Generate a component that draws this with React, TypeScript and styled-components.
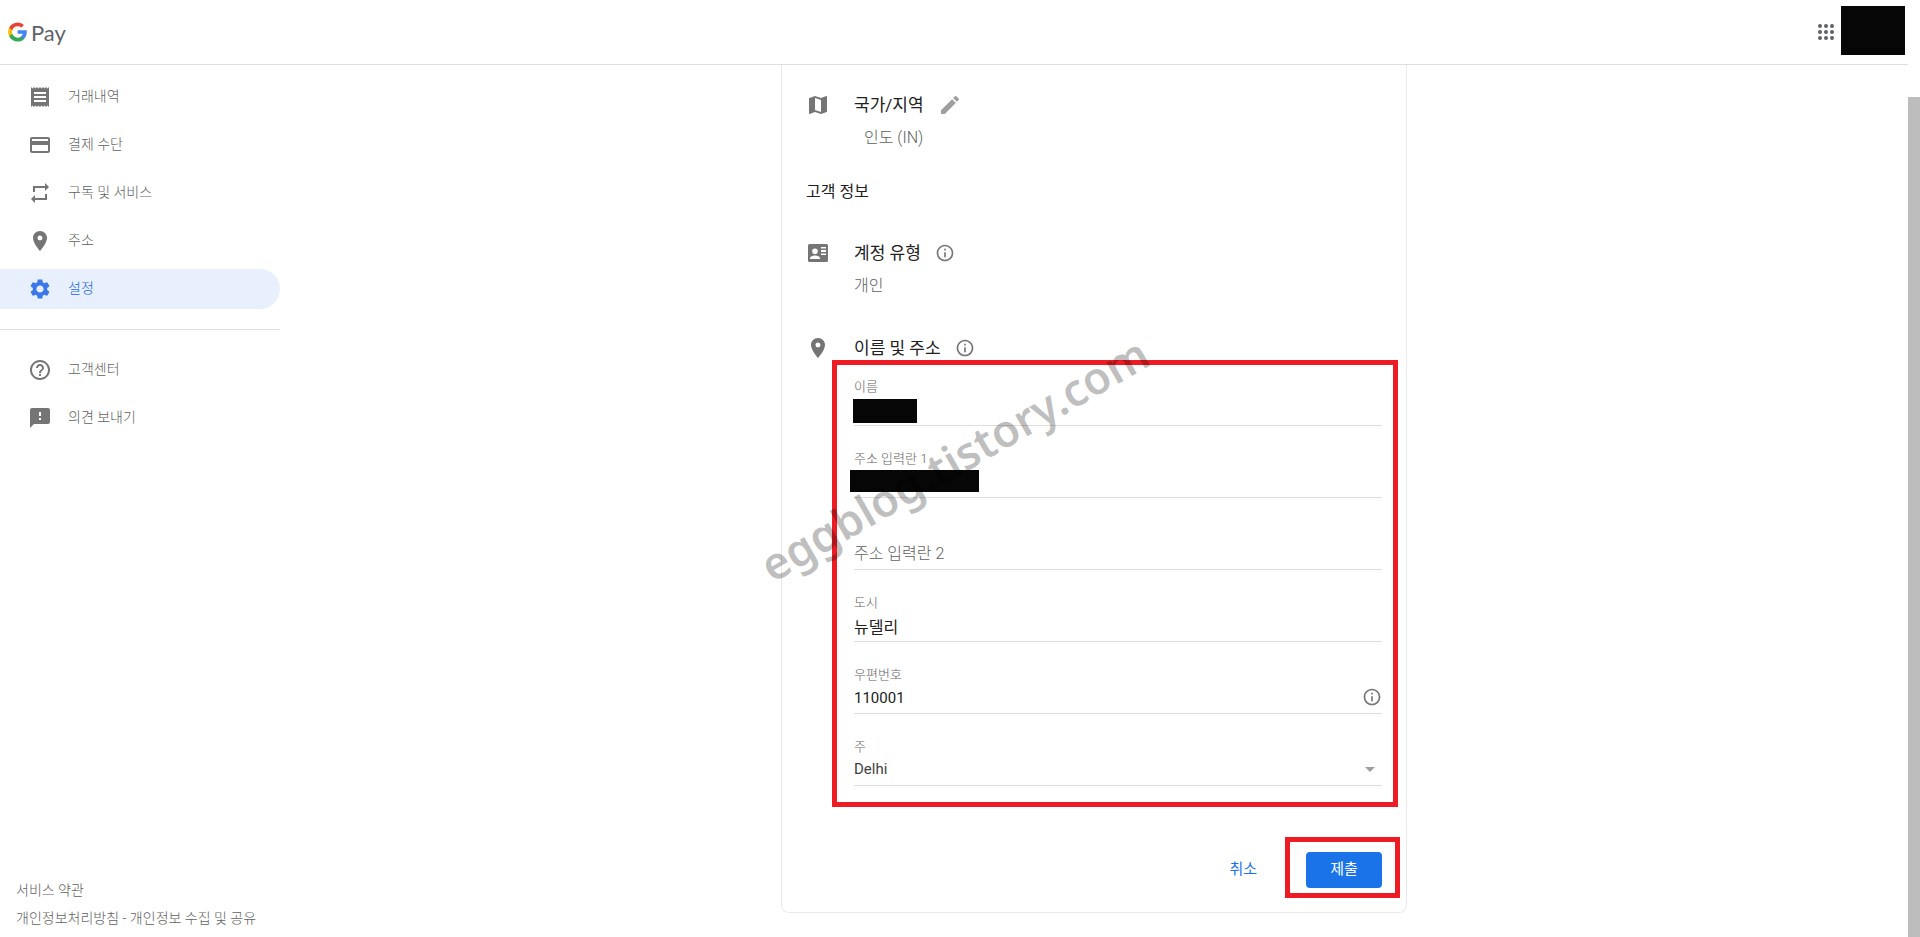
import React from 'react';
import styled, { createGlobalStyle, css } from 'styled-components';
import {
  MdArrowDropDown,
  MdCreditCard,
  MdEdit,
  MdFeedback,
  MdHelpOutline,
  MdInfoOutline,
  MdMap,
  MdPlace,
  MdReceipt,
  MdRepeat,
  MdSettings,
} from 'react-icons/md';

const GlobalStyle = createGlobalStyle`
  *, *::before, *::after { box-sizing: border-box; }
  body {
    margin: 0;
    background: #fff;
    color: #212121;
    font-family: Roboto, "Noto Sans CJK KR", sans-serif;
  }
  ul { list-style: none; }
  button, input, select { font-family: inherit; }
  svg { display: block; flex: none; }
`;

const Page = styled.div`
  display: grid;
  grid-template-columns: minmax(0, 1fr) 12px;
  min-height: 100vh;
`;

const Shell = styled.div`
  position: relative;
  display: flex;
  flex-direction: column;
  overflow: hidden;
`;

const ScrollTrack = styled.div`
  display: flex;
  padding-top: 97px;
`;

const ScrollThumb = styled.div`
  flex: 1;
  background: #bdbdbd;
`;

const Header = styled.header`
  display: flex;
  align-items: center;
  justify-content: space-between;
  height: 65px;
  padding: 0 3px 0 8px;
  border-bottom: 1px solid #dedede;
`;

const Brand = styled.a`
  display: flex;
  align-items: center;
  gap: 4px;
  color: #5f6368;
  font-family: Lato, sans-serif;
  font-size: 22px;
  line-height: 24px;
  text-decoration: none;
`;

const Wordmark = styled.span`
  padding-top: 2px;
`;

const HeaderTools = styled.div`
  display: flex;
  align-items: center;
  gap: 3px;
  height: 64px;
`;

const IconButton = styled.button<{ $tone?: string }>`
  display: flex;
  padding: 0;
  border: 0;
  background: none;
  color: ${({ $tone }) => $tone ?? '#757575'};
  cursor: pointer;
`;

const Avatar = styled.div`
  align-self: flex-start;
  width: 64px;
  height: 49px;
  margin-top: 6px;
  background: #060606;
`;

const Body = styled.div`
  display: flex;
  flex: 1;
`;

const Sidebar = styled.aside`
  display: flex;
  flex: none;
  flex-direction: column;
  width: 280px;
  padding: 12px 0 5px;
`;

const NavList = styled.ul`
  display: flex;
  flex-direction: column;
  gap: 8px;
  margin: 0;
  padding: 0;

  & + & {
    margin-top: 20px;
    padding-top: 20px;
    border-top: 1px solid #e0e0e0;
  }
`;

const NavLink = styled.a<{ $active?: boolean }>`
  display: flex;
  align-items: center;
  gap: 16px;
  height: 40px;
  padding-left: 28px;
  border-radius: 0 20px 20px 0;
  color: #757575;
  text-decoration: none;

  ${({ $active }) =>
    $active &&
    css`
      background: #e8f0fe;
      color: #3b78e7;
    `}
`;

const NavLabel = styled.span<{ $active?: boolean }>`
  padding-bottom: 3px;
  color: ${({ $active }) => ($active ? '#1a66e0' : '#616161')};
  font-size: 14px;
  font-weight: 300;
  line-height: 20px;
`;

const LegalLinks = styled.footer`
  display: flex;
  flex-direction: column;
  align-items: flex-start;
  margin-top: auto;
  padding-left: 16px;
`;

const LegalLink = styled.a`
  color: #616161;
  font-size: 14px;
  font-weight: 300;
  line-height: 28px;
  text-decoration: none;
`;

const Main = styled.main`
  display: flex;
  flex: 1;
  align-items: flex-start;
  justify-content: center;
  padding-bottom: 24px;
`;

const Card = styled.section`
  width: 100%;
  max-width: 626px;
  padding-top: 28px;
  border: 1px solid #e8eaed;
  border-top: 0;
  border-radius: 0 0 8px 8px;
`;

const Setting = styled.div<{ $space?: number }>`
  display: grid;
  grid-template-columns: 24px 1fr;
  column-gap: 24px;
  row-gap: 9px;
  margin-top: ${({ $space }) => $space ?? 0}px;
  padding: 0 24px;
  color: #757575;
`;

const SettingTitle = styled.div`
  display: flex;
  align-items: center;
  gap: 14px;
`;

const SettingName = styled.h3`
  margin: 0;
  color: #212121;
  font-size: 17px;
  font-weight: 400;
  line-height: 24px;
`;

const SettingValue = styled.p<{ $indent?: boolean }>`
  grid-column: 2;
  margin: 0;
  padding-left: ${({ $indent }) => ($indent ? 10 : 0)}px;
  color: #616161;
  font-size: 16px;
  font-weight: 300;
  line-height: 24px;
`;

const GroupHeading = styled.h2`
  margin: 30px 0 0;
  padding: 0 24px;
  font-size: 16px;
  font-weight: 400;
  line-height: 24px;
`;

const FieldsHighlight = styled.div`
  display: flex;
  flex-direction: column;
  gap: 11px;
  margin: 0 8px 0 50px;
  padding: 0 11px 16px 17px;
  border: 5px solid #ed1c24;
`;

const Field = styled.div`
  position: relative;
  display: flex;
  flex-direction: column;
  justify-content: flex-end;
  gap: 2px;
  height: 61px;
  padding-bottom: 4px;
  border-bottom: 1px solid #dedede;
`;

const FieldLabel = styled.label`
  color: #616161;
  font-size: 13px;
  font-weight: 300;
  line-height: 16px;
`;

const FieldRow = styled.div`
  display: flex;
  align-items: center;
  height: 24px;
`;

const control = css`
  flex: 1;
  min-width: 0;
  height: 24px;
  border: 0;
  outline: 0;
  background: none;
`;

const TextInput = styled.input<{ $latin?: boolean }>`
  ${control}
  padding: 1px 0 0;
  color: #212121;
  font-size: ${({ $latin }) => ($latin ? 15 : 16)}px;

  &::placeholder {
    color: #616161;
    font-weight: 300;
    opacity: 1;
  }
`;

const Select = styled.select`
  ${control}
  appearance: none;
  padding: 0;
  color: #424242;
  font-size: 15px;
`;

const Redaction = styled.span<{ $wide?: boolean }>`
  position: absolute;
  bottom: ${({ $wide }) => ($wide ? 5 : 2)}px;
  left: ${({ $wide }) => ($wide ? -4 : -1)}px;
  width: ${({ $wide }) => ($wide ? 129 : 64)}px;
  height: ${({ $wide }) => ($wide ? 22 : 24)}px;
  background: #060606;
`;

const Actions = styled.div`
  display: flex;
  align-items: center;
  justify-content: flex-end;
  gap: 28px;
  padding: 30px 6px 14px;
`;

const TextButton = styled.button`
  padding: 2px 0 0;
  border: 0;
  background: none;
  color: #1a73e8;
  font-size: 15px;
  line-height: 24px;
  cursor: pointer;
`;

const SubmitHighlight = styled.div`
  padding: 10px 13px 5px 16px;
  border: 5px solid #ed1c24;
`;

const SubmitButton = styled.button`
  display: block;
  width: 76px;
  height: 36px;
  padding: 0 0 6px;
  border: 0;
  border-radius: 4px;
  background: #1a73e8;
  color: #fff;
  font-size: 15px;
  cursor: pointer;
`;

const Watermark = styled.div`
  position: absolute;
  top: 49%;
  left: 50%;
  color: rgba(0, 0, 0, 0.25);
  font-family: "Noto Sans", sans-serif;
  font-size: 45px;
  font-weight: 600;
  line-height: 60px;
  white-space: nowrap;
  pointer-events: none;
  transform: translate(-50%, -50%) rotate(-30deg);
`;

const GoogleMark = () => (
  <svg width="19" height="20" viewBox="0 0 48 49" aria-hidden="true">
    <path fill="#4285f4" d="M47.5 24.6c0-1.6-.1-3.200-.4-4.700H24.300v9.200h13c-.6 3-2.300 5.500-4.800 7.200v6h7.800c4.600-4.200 7.200-10.400 7.200-17.700z" />
    <path fill="#34a853" d="M24.300 48.500c6.500 0 12-2.200 16-5.900l-7.800-6c-2.200 1.500-4.900 2.300-8.200 2.300-6.300 0-11.600-4.200-13.500-9.900h-8v6.200c4 7.900 12.100 13.300 21.500 13.300z" />
    <path fill="#fbbc05" d="M10.800 29c-1-3-1-6.200 0-9.200v-6.200h-8c-3.400 6.800-3.400 14.800 0 21.600z" />
    <path fill="#ea4335" d="M24.300 9.900c3.500 0 6.700 1.200 9.100 3.600l6.900-6.900C36.100 2.700 30.800.4 24.300.4 14.900.4 6.800 5.800 2.800 13.600l8 6.200c1.900-5.700 7.200-9.900 13.500-9.900z" />
  </svg>
);

const AppsIcon = () => (
  <svg width="24" height="24" viewBox="0 0 24 24" fill="currentColor" aria-hidden="true">
    {[6, 12, 18].map((cy) => [6, 12, 18].map((cx) => <circle key={`${cx}-${cy}`} cx={cx} cy={cy} r="2" />))}
  </svg>
);

const ContactCardIcon = () => (
  <svg width="24" height="24" viewBox="0 0 24 24" fill="currentColor" aria-hidden="true">
    <path
      fillRule="evenodd"
      d="M3.500 3h17A1.500 1.500 0 0 1 22 4.500v15a1.500 1.500 0 0 1-1.500 1.500h-17A1.500 1.500 0 0 1 2 19.500v-15A1.500 1.500 0 0 1 3.500 3zM9 7.500a2.800 2.800 0 1 0 0 5.600 2.800 2.800 0 0 0 0-5.600zM4 18h10v-.8c0-1.700-3-2.700-5-2.700s-5 1-5 2.700zM15 6v1.500h5V6zm0 3v2h5V9zm0 3.500V14h5v-1.500z"
    />
  </svg>
);

type NavEntry = { label: string; Icon: React.ComponentType<{ size?: number }>; active?: boolean };

const primaryLinks: NavEntry[] = [
  { label: '거래내역', Icon: MdReceipt },
  { label: '결제 수단', Icon: MdCreditCard },
  { label: '구독 및 서비스', Icon: MdRepeat },
  { label: '주소', Icon: MdPlace },
  { label: '설정', Icon: MdSettings, active: true },
];

const supportLinks: NavEntry[] = [
  { label: '고객센터', Icon: MdHelpOutline },
  { label: '의견 보내기', Icon: MdFeedback },
];

const NavGroup = ({ links }: { links: NavEntry[] }) => (
  <NavList>
    {links.map(({ label, Icon, active }) => (
      <li key={label}>
        <NavLink href="#" $active={active} aria-current={active ? 'page' : undefined}>
          <Icon size={24} />
          <NavLabel $active={active}>{label}</NavLabel>
        </NavLink>
      </li>
    ))}
  </NavList>
);

const InfoButton = ({ label }: { label: string }) => (
  <IconButton type="button" aria-label={label}>
    <MdInfoOutline size={20} />
  </IconButton>
);

export default function App() {
  return (
    <>
      <GlobalStyle />
      <Page>
        <Shell>
          <Header>
            <Brand href="#">
              <GoogleMark />
              <Wordmark>Pay</Wordmark>
            </Brand>
            <HeaderTools>
              <IconButton type="button" $tone="#5f6368" aria-label="Google 앱">
                <AppsIcon />
              </IconButton>
              <Avatar />
            </HeaderTools>
          </Header>
          <Body>
            <Sidebar>
              <nav>
                <NavGroup links={primaryLinks} />
                <NavGroup links={supportLinks} />
              </nav>
              <LegalLinks>
                <LegalLink href="#">서비스 약관</LegalLink>
                <LegalLink href="#">개인정보처리방침 - 개인정보 수집 및 공유</LegalLink>
              </LegalLinks>
            </Sidebar>
            <Main>
              <Card>
                <Setting>
                  <MdMap size={24} />
                  <SettingTitle>
                    <SettingName>국가/지역</SettingName>
                    <IconButton type="button" $tone="#9e9e9e" aria-label="국가/지역 수정">
                      <MdEdit size={24} />
                    </IconButton>
                  </SettingTitle>
                  <SettingValue $indent>인도 (IN)</SettingValue>
                </Setting>
                <GroupHeading>고객 정보</GroupHeading>
                <Setting $space={37}>
                  <ContactCardIcon />
                  <SettingTitle>
                    <SettingName>계정 유형</SettingName>
                    <InfoButton label="계정 유형 정보" />
                  </SettingTitle>
                  <SettingValue>개인</SettingValue>
                </Setting>
                <Setting $space={38}>
                  <MdPlace size={24} />
                  <SettingTitle>
                    <SettingName>이름 및 주소</SettingName>
                    <InfoButton label="이름 및 주소 정보" />
                  </SettingTitle>
                </Setting>
                <form onSubmit={(event) => event.preventDefault()}>
                  <FieldsHighlight>
                    <Field>
                      <FieldLabel htmlFor="name">이름</FieldLabel>
                      <FieldRow>
                        <TextInput id="name" />
                      </FieldRow>
                      <Redaction />
                    </Field>
                    <Field>
                      <FieldLabel htmlFor="address1">주소 입력란 1</FieldLabel>
                      <FieldRow>
                        <TextInput id="address1" />
                      </FieldRow>
                      <Redaction $wide />
                    </Field>
                    <Field>
                      <FieldRow>
                        <TextInput aria-label="주소 입력란 2" placeholder="주소 입력란 2" />
                      </FieldRow>
                    </Field>
                    <Field>
                      <FieldLabel htmlFor="city">도시</FieldLabel>
                      <FieldRow>
                        <TextInput id="city" defaultValue="뉴델리" />
                      </FieldRow>
                    </Field>
                    <Field>
                      <FieldLabel htmlFor="postcode">우편번호</FieldLabel>
                      <FieldRow>
                        <TextInput id="postcode" $latin defaultValue="110001" />
                        <InfoButton label="우편번호 정보" />
                      </FieldRow>
                    </Field>
                    <Field>
                      <FieldLabel htmlFor="state">주</FieldLabel>
                      <FieldRow>
                        <Select id="state" defaultValue="Delhi">
                          <option>Delhi</option>
                        </Select>
                        <MdArrowDropDown size={24} color="#9e9e9e" />
                      </FieldRow>
                    </Field>
                  </FieldsHighlight>
                  <Actions>
                    <TextButton type="button">취소</TextButton>
                    <SubmitHighlight>
                      <SubmitButton type="submit">제출</SubmitButton>
                    </SubmitHighlight>
                  </Actions>
                </form>
              </Card>
            </Main>
          </Body>
          <Watermark>eggblog.tistory.com</Watermark>
        </Shell>
        <ScrollTrack aria-hidden="true">
          <ScrollThumb />
        </ScrollTrack>
      </Page>
    </>
  );
}
